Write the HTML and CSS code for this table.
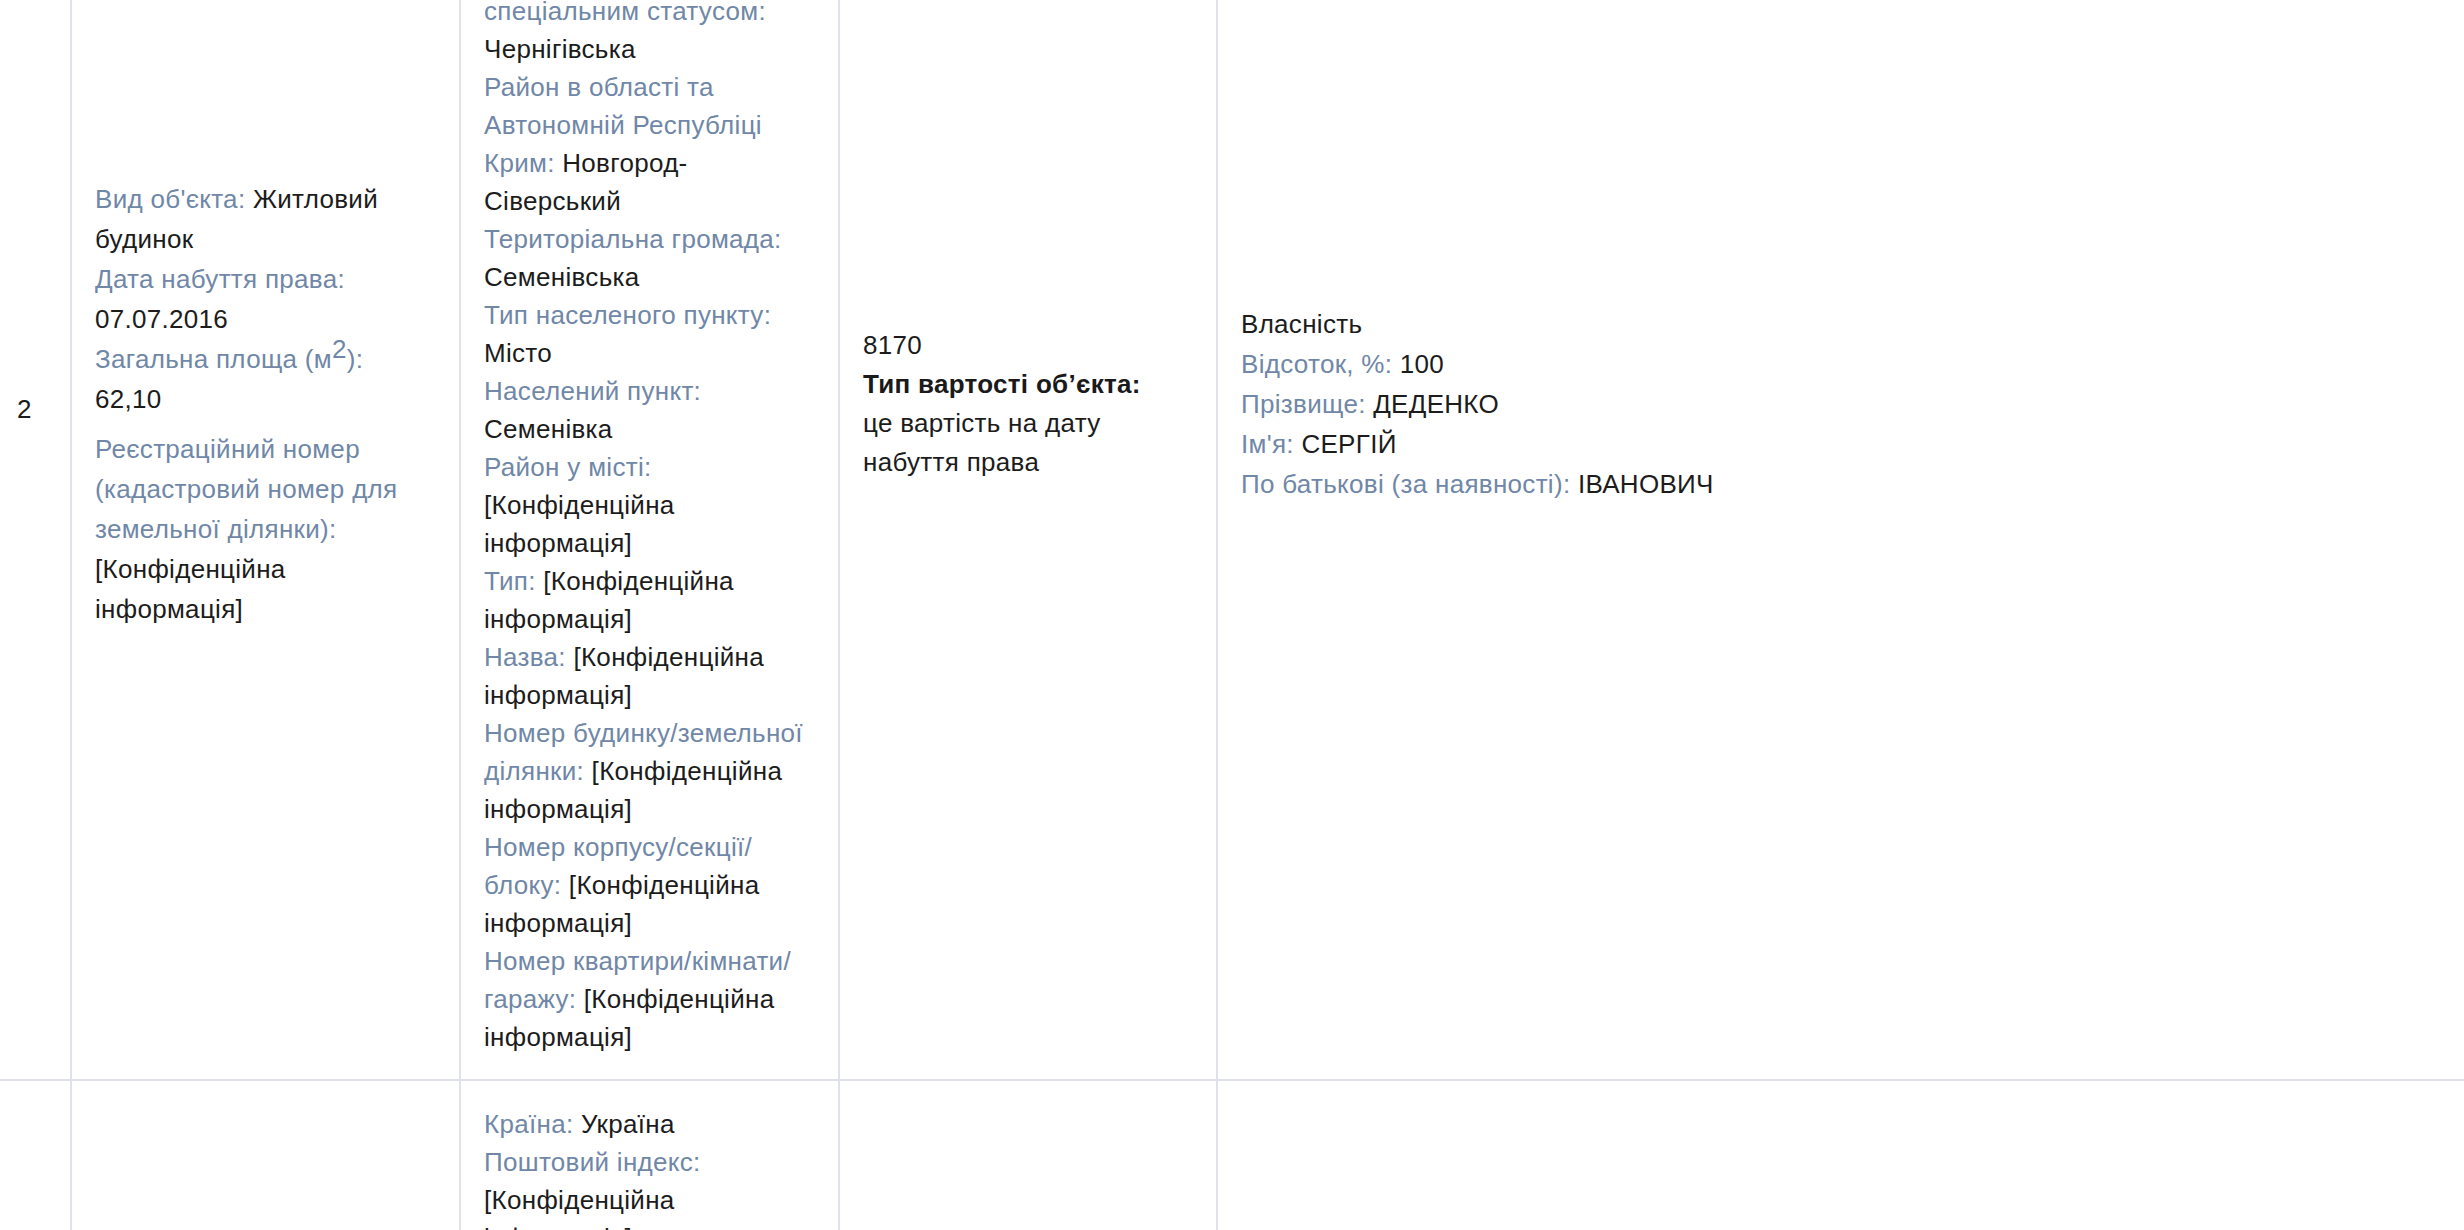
FILE: index.html
```html
<!DOCTYPE html>
<html lang="uk">
<head>
  <meta charset="UTF-8" />
  <meta name="viewport" content="width=device-width, initial-scale=1.0"/>
  <title>Декларація — об'єкти нерухомості</title>
  <link rel="stylesheet" href="styles.css">
</head>
<body>

<table class="decl-table">
  <colgroup>
    <col class="col-num">
    <col class="col-object">
    <col class="col-address">
    <col class="col-cost">
    <col class="col-owner">
  </colgroup>
  <tbody>
    <tr>
      <td class="num">2</td>
      <td class="object">
        <div><span class="label">Вид об'єкта:</span> Житловий будинок</div>
        <div><span class="label">Дата набуття права:</span> 07.07.2016</div>
        <div><span class="label">Загальна площа (м<sup>2</sup>):</span> 62,10</div>
        <div class="reg"><span class="label">Реєстраційний номер (кадастровий номер для земельної ділянки):</span> [Конфіденційна інформація]</div>
      </td>
      <td class="address">
        <div class="addr-head">
          <div><span class="label">Країна:</span> Україна</div>
          <div><span class="label">Поштовий індекс:</span> [Конфіденційна інформація]</div>
        </div>
        <div><span class="label">Область / Автономна Республіка Крим / місто з спеціальним статусом:</span> Чернігівська</div>
        <div><span class="label">Район в області та Автономній Республіці Крим:</span> Новгород-Сіверський</div>
        <div><span class="label">Територіальна громада:</span> Семенівська</div>
        <div><span class="label">Тип населеного пункту:</span> Місто</div>
        <div><span class="label">Населений пункт:</span> Семенівка</div>
        <div><span class="label">Район у місті:</span> [Конфіденційна інформація]</div>
        <div><span class="label">Тип:</span> [Конфіденційна інформація]</div>
        <div><span class="label">Назва:</span> [Конфіденційна інформація]</div>
        <div><span class="label">Номер будинку/земельної ділянки:</span> [Конфіденційна інформація]</div>
        <div><span class="label">Номер корпусу/секції/ блоку:</span> [Конфіденційна інформація]</div>
        <div><span class="label">Номер квартири/кімнати/ гаражу:</span> [Конфіденційна інформація]</div>
      </td>
      <td class="cost">
        <div>8170</div>
        <div><b>Тип вартості об’єкта:</b></div>
        <div>це вартість на дату набуття права</div>
      </td>
      <td class="owner">
        <div>Власність</div>
        <div><span class="label">Відсоток, %:</span> 100</div>
        <div><span class="label">Прізвище:</span> ДЕДЕНКО</div>
        <div><span class="label">Ім'я:</span> СЕРГІЙ</div>
        <div><span class="label">По батькові (за наявності):</span> ІВАНОВИЧ</div>
      </td>
    </tr>
    <tr>
      <td class="num"></td>
      <td class="object"></td>
      <td class="address">
        <div class="addr-head">
          <div><span class="label">Країна:</span> Україна</div>
          <div><span class="label">Поштовий індекс:</span> [Конфіденційна інформація]</div>
        </div>
        <div><span class="label">Область / Автономна Республіка Крим / місто з спеціальним статусом:</span> [Конфіденційна інформація]</div>
        <div><span class="label">Район в області та Автономній Республіці Крим:</span> [Конфіденційна інформація]</div>
        <div><span class="label">Територіальна громада:</span> [Конфіденційна інформація]</div>
      </td>
      <td class="cost"></td>
      <td class="owner"></td>
    </tr>
  </tbody>
</table>

</body>
</html>
```

FILE: styles.css
```css
body {
  margin: 0;
  background: #fff;
  color: #1c1c1c;
  font-family: "Liberation Sans", Arial, Helvetica, sans-serif;
  font-size: 26px;
  letter-spacing: 0.3px;
  overflow: hidden;
}

/* the page is scrolled: row 2 starts above the window */
.decl-table {
  width: 2464px;
  table-layout: fixed;
  border-collapse: separate;
  border-spacing: 0;
  margin-top: -274px;
}

.col-num { width: 70px; }
.col-object { width: 389px; }
.col-address { width: 379px; }
.col-cost { width: 378px; }
.col-owner { width: 1248px; }

.decl-table td {
  border-top: 2px solid #dfe2e8;
  border-left: 2px solid #dfe2e8;
  padding: 24px 23px 23px;
  vertical-align: middle;
  overflow-wrap: break-word;
}

.decl-table td.num {
  border-left: 0;
  padding: 34px 10px 24px 17px;
  line-height: 38px;
}

.label {
  color: #7087a7;
}

.object { line-height: 40px; }
.address { line-height: 38px; }
.cost { line-height: 39px; }
.owner { line-height: 40px; }

.decl-table td.object {
  padding-right: 30px;
}

.object .reg {
  margin-top: 10px;
}

.address .addr-head {
  margin-bottom: 12px;
}

.cost b {
  font-weight: 700;
  color: #1a1a1a;
}

sup {
  font-size: 100%;
  line-height: 0;
  vertical-align: 10px;
}
```
